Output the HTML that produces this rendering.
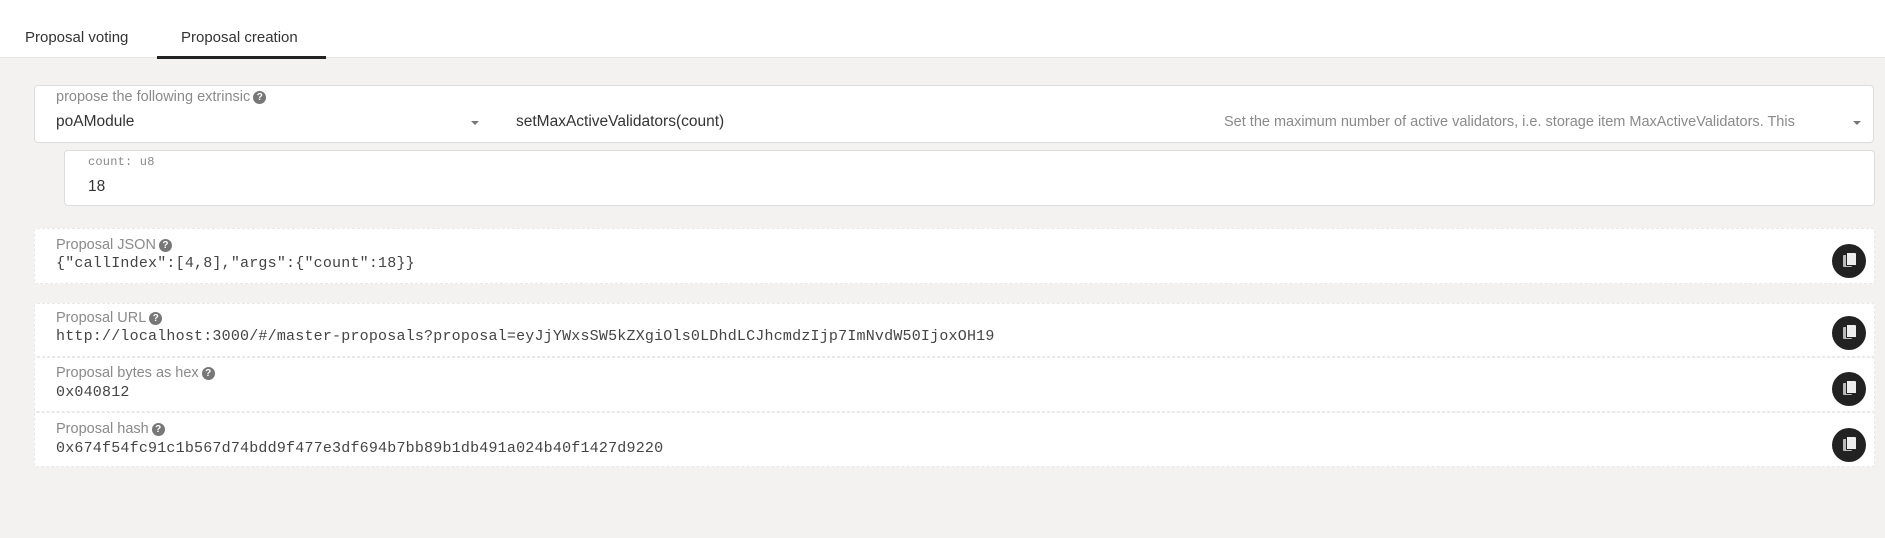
<!DOCTYPE html>
<html><head><meta charset="utf-8"><style>
body{margin:0;width:1885px;height:538px;background:#f3f2f0;font-family:"Liberation Sans",sans-serif;color:#4e4e4e;position:relative;overflow:hidden}
.hdr{position:absolute;left:0;top:0;width:1885px;height:57px;background:#fff;border-bottom:1px solid #e6e5e3}
.tab{position:absolute;top:29px;font-size:15px;color:#333}
.ul{position:absolute;left:157px;top:56px;width:169px;height:3px;background:#222}
.card{position:absolute;left:34px;width:1840px;background:#fff;border:1px solid #ddd;border-radius:4px;box-sizing:border-box}
.lbl{position:absolute;font-size:14.5px;color:#8a8a8a}
.q{display:inline-block;width:13px;height:13px;border-radius:50%;background:#777;color:#fff;font-size:10px;font-weight:bold;text-align:center;line-height:13px;vertical-align:1px;margin-left:3px}
.txt{position:absolute;font-size:15.5px;color:#333}
.mono{font-family:"Liberation Mono",monospace;font-size:15px;letter-spacing:0.2px;color:#444}
.out{position:absolute;left:34px;width:1841px;background:#fff;border:1px dashed #e8e8e8;border-radius:3px;box-sizing:border-box}
.cp{position:absolute;left:1832px;width:34px;height:34px;border-radius:50%;background:#222}
.cp:before{content:"";position:absolute;left:11px;top:11px;width:9px;height:12px;background:#bbb;border-radius:1px}
.cp:after{content:"";position:absolute;left:14px;top:9px;width:9px;height:12px;background:#eee;border-radius:1px;border-left:1px solid #222;border-bottom:1px solid #222}
.arr{position:absolute;width:0;height:0;border-left:4px solid transparent;border-right:4px solid transparent;border-top:4px solid #777}
</style></head><body>
<div class="hdr"></div>
<div class="tab" style="left:25px">Proposal voting</div>
<div class="tab" style="left:181px">Proposal creation</div>
<div class="ul"></div>

<div class="card" style="top:85px;height:58px"></div>
<div class="lbl" style="left:56px;top:89px">propose the following extrinsic<span class="q">?</span></div>
<div class="txt" style="left:56px;top:113px">poAModule</div>
<div class="arr" style="left:471px;top:121px"></div>
<div class="txt" style="left:516px;top:113px">setMaxActiveValidators(count)</div>
<div class="lbl" style="left:1224px;top:114px;font-size:14.5px">Set the maximum number of active validators, i.e. storage item MaxActiveValidators. This</div>
<div class="arr" style="left:1853px;top:121px"></div>

<div class="card" style="left:64px;width:1811px;top:150px;height:56px"></div>
<div class="mono" style="position:absolute;left:88px;top:155px;font-size:12px;color:#888">count: u8</div>
<div class="txt" style="left:88px;top:178px">18</div>

<div class="out" style="top:228px;height:56px"></div>
<div class="lbl" style="left:56px;top:237px">Proposal JSON<span class="q">?</span></div>
<div class="mono" style="position:absolute;left:56px;top:255px">{"callIndex":[4,8],"args":{"count":18}}</div>
<div class="cp" style="top:244px"></div>

<div class="out" style="top:303px;height:54px"></div>
<div class="lbl" style="left:56px;top:310px">Proposal URL<span class="q">?</span></div>
<div class="mono" style="position:absolute;left:56px;top:328px">http://localhost:3000/#/master-proposals?proposal=eyJjYWxsSW5kZXgiOls0LDhdLCJhcmdzIjp7ImNvdW50IjoxOH19</div>
<div class="cp" style="top:316px"></div>

<div class="out" style="top:357px;height:55px"></div>
<div class="lbl" style="left:56px;top:365px">Proposal bytes as hex<span class="q">?</span></div>
<div class="mono" style="position:absolute;left:56px;top:384px">0x040812</div>
<div class="cp" style="top:372px"></div>

<div class="out" style="top:412px;height:55px"></div>
<div class="lbl" style="left:56px;top:421px">Proposal hash<span class="q">?</span></div>
<div class="mono" style="position:absolute;left:56px;top:440px">0x674f54fc91c1b567d74bdd9f477e3df694b7bb89b1db491a024b40f1427d9220</div>
<div class="cp" style="top:428px"></div>
</body></html>
